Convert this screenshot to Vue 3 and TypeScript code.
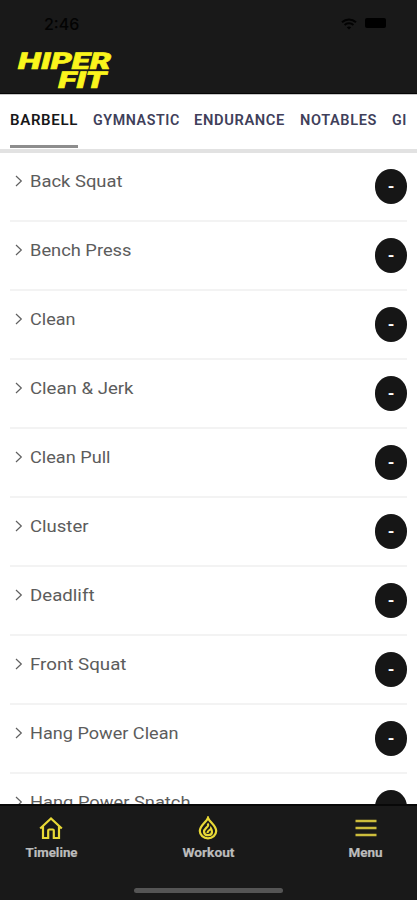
<script setup lang="ts">
interface Tab { label: string; width: number }

const tabs: Tab[] = [
  { label: 'BARBELL', width: 68 },
  { label: 'GYMNASTIC', width: 87 },
  { label: 'ENDURANCE', width: 91 },
  { label: 'NOTABLES', width: 77 },
  { label: 'GI', width: 15 },
]

interface Exercise { name: string; width: number }

const exercises: Exercise[] = [
  { name: 'Back Squat', width: 92 },
  { name: 'Bench Press', width: 101 },
  { name: 'Clean', width: 45 },
  { name: 'Clean & Jerk', width: 103 },
  { name: 'Clean Pull', width: 80 },
  { name: 'Cluster', width: 58 },
  { name: 'Deadlift', width: 64 },
  { name: 'Front Squat', width: 96 },
  { name: 'Hang Power Clean', width: 148 },
  { name: 'Hang Power Snatch', width: 160 },
]
</script>

<template>
  <div class="screen">
    <header class="header">
      <div class="status">
        <span class="time">2:46</span>
        <div class="status-icons">
          <svg width="16" height="12" viewBox="0 0 16 12" fill="none" stroke="#020202" stroke-width="2">
            <path d="M1 4.3C5 .6 11 .6 15 4.3M3.6 7C6 4.8 10 4.8 12.4 7" />
            <path d="M8 11.5 5.8 9.2Q8 7.6 10.2 9.2Z" fill="#020202" stroke="none" />
          </svg>
          <span class="battery"></span>
        </div>
      </div>
      <svg class="logo" width="96" height="40" viewBox="0 0 96 40">
        <g transform="skewX(-14)">
          <text x="5" y="18.5" textLength="93" lengthAdjust="spacingAndGlyphs">HIPER</text>
          <text x="50" y="38" textLength="48" lengthAdjust="spacingAndGlyphs">FIT</text>
        </g>
      </svg>
    </header>

    <nav class="tabs">
      <div v-for="(tab, i) in tabs" :key="tab.label" class="tab" :class="{ active: i === 0 }">
        <svg :width="tab.width" height="18">
          <text x="0" y="14" :textLength="tab.width" lengthAdjust="spacingAndGlyphs">{{ tab.label }}</text>
        </svg>
      </div>
    </nav>

    <main class="list">
      <div v-for="item in exercises" :key="item.name" class="row">
        <svg class="chevron" width="8" height="12" viewBox="0 0 8 12"><path d="m1 1 5.3 5L1 11" /></svg>
        <svg class="name" :width="item.width + 2" height="22">
          <text x="0" y="16" :textLength="item.width + 0.5" lengthAdjust="spacingAndGlyphs">{{ item.name }}</text>
        </svg>
        <span class="badge">-</span>
      </div>
    </main>

    <footer class="bottom">
      <div class="actions">
        <div class="action">
          <svg width="24" height="24" viewBox="0 0 24 24">
            <path d="M1.2 12.5 12 2.5l10.8 10M4 10.5V22h5.2v-7.5q0-1 1-1h3.6q1 0 1 1V22H20V10.5" />
          </svg>
          <svg class="label" width="53" height="16"><text x="0.5" y="12.5" textLength="52" lengthAdjust="spacingAndGlyphs">Timeline</text></svg>
        </div>
        <div class="action">
          <svg width="24" height="24" viewBox="0 0 24 24">
            <path d="M12 1.8C10.5 6 3.8 9.5 3.8 15a8.2 7.3 0 0 0 16.4 0C20.2 9.5 13.5 6 12 1.8Z" />
            <path d="M11.5 7.5c3 3-4 4.5-3.5 8.5.5 4.5 8 4 8 0 0-2-1-3.5-1-3.5-.5 2-3.5 1.5-3.5 4.5" />
          </svg>
          <svg class="label" width="53" height="16"><text x="0.5" y="12.5" textLength="52" lengthAdjust="spacingAndGlyphs">Workout</text></svg>
        </div>
        <div class="action">
          <svg class="bars" width="24" height="24" viewBox="0 0 24 24"><path d="M1.5 5h21M1.5 12h21M1.5 19h21" /></svg>
          <svg class="label" width="35" height="16"><text x="0.5" y="12.5" textLength="34" lengthAdjust="spacingAndGlyphs">Menu</text></svg>
        </div>
      </div>
      <div class="home-bar"></div>
    </footer>
  </div>
</template>

<style>
body { margin: 0; background: #fff; }
</style>

<style scoped>
.screen {
  display: flex;
  flex-direction: column;
  width: 417px;
  height: 900px;
  overflow: hidden;
  background: #fff;
  font-family: Roboto, "Liberation Sans", sans-serif;
}
.header { flex: none; height: 94px; box-sizing: border-box; background: #191919; border-bottom: 1px solid #050505; }
.status { display: flex; justify-content: space-between; height: 46px; padding: 15px 31px 0 44px; box-sizing: border-box; color: #030303; }
.time { font: 500 16px/18px Inter, sans-serif; }
.status-icons { display: flex; gap: 8px; padding-top: 3px; }
.battery { width: 21px; height: 10px; border-radius: 2px; background: #000; }
.logo { display: block; margin: 4px 0 0 16px; overflow: visible; }
.logo text { font: 900 23px Roboto, sans-serif; fill: #faf51c; stroke: #faf51c; stroke-width: .6; }
.tabs { flex: none; display: flex; gap: 14.7px; height: 59px; padding-left: 10px; box-sizing: border-box; border-top: 1px solid #c9c9c9; border-bottom: 4px solid #e2e2e2; width: 417px; overflow: hidden; }
.tab { flex: none; height: 53px; padding-top: 16px; box-sizing: border-box; }
.tab svg { display: block; }
.tab text { font: 600 14px Roboto, sans-serif; letter-spacing: .6px; fill: #40405a; }
.tab.active { border-bottom: 3px solid #8d8d8d; }
.tab.active text { fill: #171719; }
.list { flex: 1; min-height: 0; overflow: hidden; padding: 0 10px; }
.row { display: flex; height: 69px; box-sizing: border-box; border-bottom: 2px solid #f3f3f3; }
.chevron { margin: 22px 7px 0 5px; fill: none; stroke: #606060; stroke-width: 1.2; }
.name { margin-top: 18px; }
.name text { font: 400 17px Roboto, sans-serif; fill: #5c5c5c; }
.badge { margin: 16px 0 0 auto; width: 32px; height: 35px; border-radius: 16px / 17px; background: #161616; color: #fff; font: 700 17px/34px Roboto, sans-serif; text-align: center; }
.bottom { flex: none; height: 96px; box-sizing: border-box; background: #191919; border-top: 2px solid #080808; padding: 10px 0 0; }
.actions { display: flex; justify-content: space-between; padding: 0 25px 0 24.5px; }
.action { display: flex; flex-direction: column; align-items: center; gap: 4px; width: 53px; }
.action svg { fill: none; stroke: #e8d936; stroke-width: 2.2; }
.action .bars { stroke: #cdbd3c; stroke-width: 2.6; }
.action .label text { font: 700 12.5px Roboto, sans-serif; fill: #bcbcbc; stroke: #bcbcbc; stroke-width: .2; }
.home-bar { width: 149px; height: 5px; margin: 28px auto 0; border-radius: 3px; background: #555; }
</style>
